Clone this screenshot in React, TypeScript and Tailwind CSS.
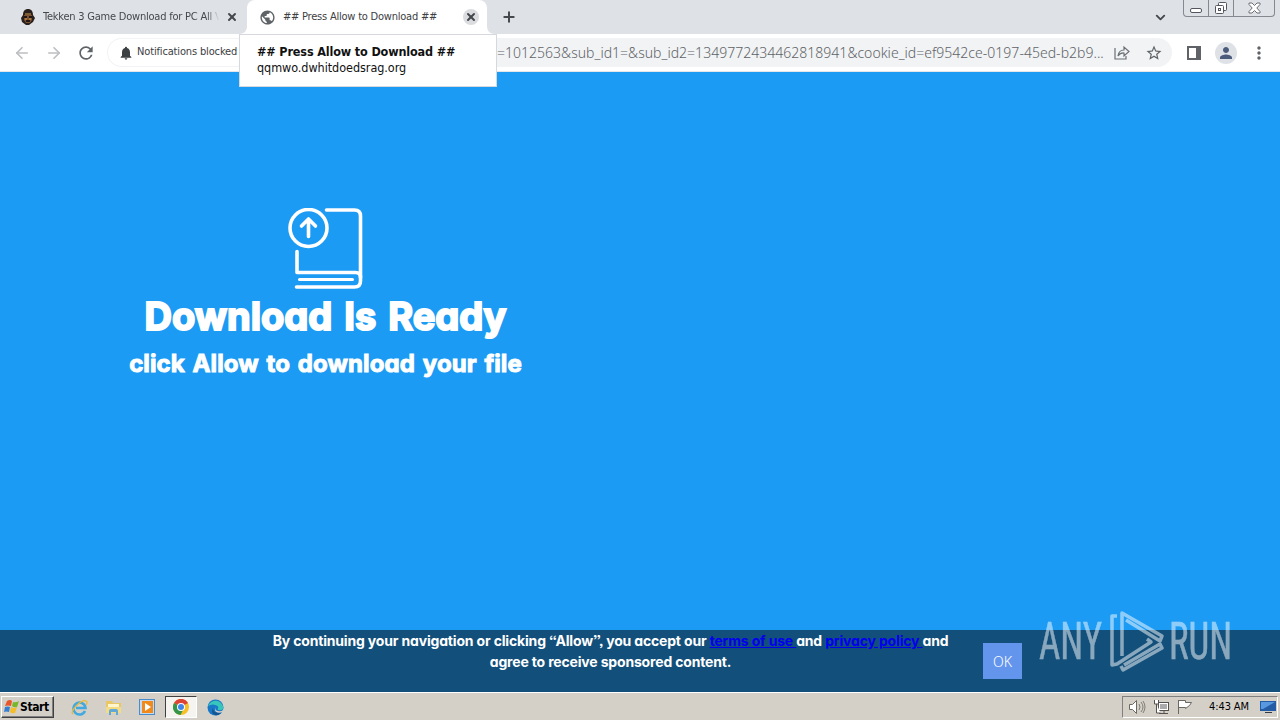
import React from 'react';
import { ArrowLeft, ArrowRight, ChevronDown, Plus, X } from 'lucide-react';
import { MdRefresh, MdNotifications, MdPublic, MdStarBorder, MdPerson, MdMoreVert } from 'react-icons/md';

const UI = "font-['DejaVu_Sans_Condensed','DejaVu_Sans',sans-serif] [font-stretch:condensed]";

function WindowControls() {
  return (
    <div className="ml-[15px] mr-[5px] flex h-[17px] w-[92px] shrink-0 self-start rounded-b-[4px] border border-t-0 border-[#85888f] bg-[#dee1e6]">
      <div className="flex w-[25px] items-end justify-center border-r border-[#85888f] pb-[3px]">
        <div className="h-[5px] w-3 rounded-[2px] border border-[#53565f] bg-white" />
      </div>
      <div className="flex w-[25px] items-center justify-center border-r border-[#85888f]">
        <svg width="14" height="14" viewBox="0 0 14 14" fill="#fff" stroke="#53565f">
          <rect x="4.5" y="1.5" width="8" height="8" rx="1" />
          <rect x="1.5" y="4.5" width="8" height="8" rx="1" />
          <rect x="4.5" y="7.5" width="2" height="2" />
        </svg>
      </div>
      <div className="flex flex-1 items-center justify-center">
        <svg width="13" height="12" viewBox="0 0 13 12" fill="#fff" stroke="#6a6d76">
          <path d="M1 1h3l2.5 2.5L9 1h3v1.5L8.8 6l3.2 3.5V11H9L6.5 8.5 4 11H1V9.5L4.2 6 1 2.5z" />
        </svg>
      </div>
    </div>
  );
}

function TabStrip() {
  return (
    <div className="flex h-[34px] items-center bg-[#dee1e6]">
      <div className="flex w-[247px] items-center pl-5">
        <svg width="16" height="16" viewBox="0 0 16 16" className="shrink-0">
          <path d="M3 6C3 2 5 0 8 0s5 2 5 6l2 3-2 4-4 3H6l-4-3-1-4z" fill="#29201d" />
          <path d="M4 6h8v5l-2 3H6l-2-3z" fill="#7d5030" />
          <path d="M4 7h3v2H4zM9 7h3v2H9zM6 11h4v2H6z" fill="#211816" />
          <path d="M5 5h6M5 10h2M9 10h2" stroke="#d49b52" />
        </svg>
        <div className="ml-[7px] w-[178px] whitespace-nowrap text-[11px] tracking-[-0.22px] text-[#45484d] [mask-image:linear-gradient(to_right,#000_92%,transparent_99%)]">
          Tekken 3 Game Download for PC All V
        </div>
        <X className="ml-[5px] h-3 w-3 shrink-0 text-[#45484d]" strokeWidth={4} />
      </div>
      <div className="relative flex h-full w-[240px] items-center rounded-t-lg bg-white pl-3">
        <svg className="absolute bottom-0 -left-2" width="8" height="8" viewBox="0 0 8 8">
          <path d="M8 0v8H0C5 8 8 5 8 0z" fill="#fff" />
        </svg>
        <svg className="absolute bottom-0 -right-2" width="8" height="8" viewBox="0 0 8 8">
          <path d="M0 0v8h8C3 8 0 5 0 0z" fill="#fff" />
        </svg>
        <MdPublic className="h-[17px] w-[17px] shrink-0 text-[#5f6368]" />
        <div className="ml-[7px] w-[180px] whitespace-nowrap text-[11px] tracking-[-0.22px] text-[#3c4043]">
          ## Press Allow to Download ##
        </div>
        <div className="flex h-4 w-4 items-center justify-center rounded-full bg-[#dadce0]">
          <X className="h-3 w-3 text-[#45484d]" strokeWidth={4} />
        </div>
      </div>
      <Plus className="ml-[14px] h-4 w-4 text-[#45484d]" strokeWidth={3} />
      <ChevronDown className="ml-auto h-[15px] w-[15px] text-[#45484d]" strokeWidth={3} />
      <WindowControls />
    </div>
  );
}

function Toolbar() {
  return (
    <div className="flex h-[38px] items-center border-b border-[#e4e6e9] bg-white pl-[13px]">
      <ArrowLeft className="h-[18px] w-[18px] text-[#bcbec1]" strokeWidth={2.2} />
      <ArrowRight className="ml-[14px] h-[18px] w-[18px] text-[#bcbec1]" strokeWidth={2.2} />
      <MdRefresh className="ml-[13px] h-5 w-5 text-[#5f6368]" />
      <div className="ml-3 flex h-[29px] w-[1064px] items-center rounded-full bg-[#f1f3f4]">
        <div className="flex h-[27px] w-[150px] items-center rounded-l-full bg-white pl-[10px] ring-1 ring-[#f1f3f4]">
          <MdNotifications className="h-4 w-4 shrink-0 text-[#3c4043]" />
          <span className="ml-[3px] whitespace-nowrap text-[11px] tracking-[-0.15px] text-[#3c4043]">Notifications blocked</span>
        </div>
        <div className="ml-[239px] w-[610px] whitespace-nowrap font-['Noto_Sans',sans-serif] text-[14px] font-light tracking-[0.02px] text-[#5f6368]">
          =1012563&amp;sub_id1=&amp;sub_id2=1349772434462818941&amp;cookie_id=ef9542ce-0197-45ed-b2b9...
        </div>
        <svg className="ml-[7px] shrink-0" width="16" height="16" viewBox="0 0 16 16" fill="none" stroke="#6b6f74" strokeWidth="1.2">
          <path d="M1 3v11h11v-3" />
          <path d="M4 11c.5-4 3-6 6-6V2l5 4.500L10 11V8c-2.500-.2-4.500.8-6 3z" />
        </svg>
        <MdStarBorder className="ml-[15px] h-[18px] w-[18px] shrink-0 text-[#5f6368]" />
      </div>
      <div className="ml-[15px] h-[14px] w-[14px] border-2 border-r-[5px] border-[#5f6368]" />
      <div className="ml-[14px] flex h-[22px] w-[22px] items-center justify-center rounded-full bg-[#dee1e6]">
        <MdPerson className="h-[18px] w-[18px] text-[#4a5b7c]" />
      </div>
      <MdMoreVert className="ml-3 h-5 w-5 text-[#5f6368]" />
    </div>
  );
}

function TabTooltip() {
  return (
    <div className="absolute top-[34px] left-[239px] h-[53px] w-[258px] border border-[#d5d8dc] bg-white pt-[9px] pl-[17px] text-[#111]">
      <div className="whitespace-nowrap text-[12.5px] leading-4 font-bold tracking-[-0.14px]">## Press Allow to Download ##</div>
      <div className="whitespace-nowrap text-[12.5px] leading-4 tracking-[-0.05px]">qqmwo.dwhitdoedsrag.org</div>
    </div>
  );
}

function BookIcon() {
  return (
    <svg width="76" height="82" viewBox="0 0 76 82" fill="none" stroke="#fff" strokeWidth="3.6" strokeLinecap="round">
      <circle cx="20.500" cy="20" r="18.500" />
      <path d="M20.500 28.500V12M13.500 18l7-7 7 7" />
      <path d="M38.500 2h28q6 0 6 6V73q0 6-6 6H8.500" />
      <path d="M9 43.500v21H67.500q5 0 5 5" />
      <path d="M11.500 71.500h53" strokeWidth="3" />
    </svg>
  );
}

const ROUNDED = "font-[Inter,sans-serif] [font-feature-settings:'cv11','ss03'] [stroke-linejoin:round] [paint-order:stroke_fill]";

function CookieBar() {
  return (
    <div className="flex h-[62px] bg-[#124f7a]">
      <p className={`${ROUNDED} ml-[260px] w-[701px] text-center text-[14px] leading-[21px] font-bold tracking-[-0.17px] text-white`}>
        <span className="whitespace-nowrap">
          By continuing your navigation or clicking “Allow”, you accept our{' '}
          <a className="text-[#0000ee] underline">terms of use </a>and{' '}
          <a className="text-[#0000ee] underline">privacy policy </a>and
        </span>
        <br />
        agree to receive sponsored content.
      </p>
      <button className="mt-[13px] ml-[22px] h-9 w-[39px] bg-[#6495ed] font-['Noto_Sans',sans-serif] text-[14px] font-light text-white">OK</button>
    </div>
  );
}

function Watermark() {
  return (
    <div className="absolute top-[608px] left-[1039px] flex h-[66px] w-[195px] items-center font-[Roboto,sans-serif] text-[52px] leading-none text-white opacity-50">
      <div className="w-[70px] pt-[2px]"><span className="inline-block origin-left scale-x-[0.71] [-webkit-text-stroke:0.5px_white]">ANY</span></div>
      <svg className="shrink-0" width="56" height="64" viewBox="0 0 56 64" fill="none" stroke="currentColor" strokeWidth="3.500" strokeLinejoin="round">
        <path d="M8 7H3v49l5-1 34-22-4-3" />
        <path d="M13 47V4l40 23-2 5-34-21" />
        <path d="M15 56l36-21 2 4-39 22-2-4" />
      </svg>
      <div className="ml-[4px] w-[62px] pt-[2px]"><span className="inline-block origin-left scale-x-[0.71] [-webkit-text-stroke:0.5px_white]">RUN</span></div>
    </div>
  );
}

function Taskbar() {
  return (
    <div className="flex h-7 items-center border-t border-white bg-[#d4d0c8] pt-px pl-px text-black">
      <div className="flex h-[22px] w-[53px] items-center border border-t-white border-r-[#404040] border-b-[#404040] border-l-white pl-[2px] shadow-[inset_-1px_-1px_#808080]">
        <svg width="16" height="16" viewBox="0 0 16 16" className="shrink-0">
          <path d="M3 2q3-2 5 0L7 7q-3-1-6 0z" fill="#e8572a" />
          <path d="M9 3q3 1 6-1l-2 6q-3 1-5-1z" fill="#78b62b" />
          <path d="M1 8q3-1 5 0l-1 5q-3-1-5 0z" fill="#347fd1" />
          <path d="M7 8q3 2 6 0l-2 6q-3 1-5-1z" fill="#f5bd27" />
        </svg>
        <span className="text-[12px] font-bold tracking-[-0.4px]">Start</span>
      </div>
      <svg className="ml-[17px]" width="17" height="17" viewBox="0 0 17 17" fill="none">
        <path d="M14 12a6 6 0 1 1 .5-3H5" stroke="#41a9df" strokeWidth="2.600" />
        <path d="M2 15C-2 12 11 0 15 2q2 1 0 4" stroke="#e9b93a" strokeWidth="1.300" />
      </svg>
      <svg className="ml-[17px]" width="17" height="17" viewBox="0 0 17 17">
        <path d="M1 2h6l1 2h8v9H1z" fill="#e9c765" />
        <path d="M3 5h11v5H3z" fill="#fff6cf" />
        <path d="M1 8h15v6H1z" fill="#f4dc85" />
        <path d="M4 16v-4q0-2 2-2h5q2 0 2 2v4h-2v-3H6v3z" fill="#61a8d6" />
      </svg>
      <svg className="ml-[17px]" width="17" height="17" viewBox="0 0 17 17">
        <rect x="0.500" y="0.500" width="15" height="15" fill="#c3daf0" stroke="#4b8cc8" />
        <rect x="3" y="2" width="11" height="12" fill="#f08a1d" />
        <path d="M6 4l6 4-6 4z" fill="#fff" />
      </svg>
      <div className="ml-[9px] flex h-[22px] w-8 items-center justify-center border border-[#404040] border-r-white border-b-white bg-[#f5f4f1]">
        <svg width="16" height="16" viewBox="0 0 16 16">
          <circle cx="8" cy="8" r="8" fill="#f6c026" />
          <path d="M8 8L1 4A8 8 0 0 1 15 4z" fill="#dc4438" />
          <path d="M8 8L1 4A8 8 0 0 0 7.500 16l3-6z" fill="#34964b" />
          <circle cx="8" cy="8" r="4" fill="#fff" />
          <circle cx="8" cy="8" r="3" fill="#4285e8" />
        </svg>
      </div>
      <svg className="ml-[10px]" width="17" height="17" viewBox="0 0 17 17">
        <circle cx="8.500" cy="8.500" r="8" fill="#1878c7" />
        <path d="M1 7a8 8 0 0 1 15.500 2q-1 3-5 2c-2-1 1-2-1-4Q6 4 1 7z" fill="#38c5bc" />
        <path d="M6 9q0 6 8 4-2 4-6 3-5-2-2-7z" fill="#145591" />
        <path d="M9 8q-2 3 2 4 3 1 5-1v2q-7 2-8-2 0-2 1-3z" fill="#d4d0c8" />
      </svg>
      <div className="mr-[2px] ml-auto flex h-[22px] w-[156px] items-center border border-[#808080] border-r-white border-b-white pl-[6px]">
        <svg width="17" height="16" viewBox="0 0 17 16" fill="#fff" stroke="#6a6862">
          <path d="M.5 5.500h3l4-4v13l-4-4h-3z" />
          <path d="M10 5q2 3 0 6M12 3q4 5 0 10M14 2q4 6 0 12" fill="none" strokeWidth="0.800" />
        </svg>
        <svg className="ml-[7px]" width="17" height="16" viewBox="0 0 17 16" fill="#fff" stroke="#55534f">
          <rect x="5.500" y="3.500" width="10" height="8" />
          <path d="M7 5h7v5H7z" fill="#aaa" stroke="none" />
          <path d="M6 14.500h9M11 12v2" />
          <path d="M1.500 1v4h4V1M3.500 5v9h4" />
        </svg>
        <svg className="ml-[7px]" width="17" height="16" viewBox="0 0 17 16" fill="#fff" stroke="#6a6862">
          <path d="M1.500 1.500h7v2h6l-2 3-4 3v-1h-7z" />
          <path d="M1.500 1v14" />
        </svg>
        <span className="ml-[15px] w-[43px] text-[11px] tracking-[-0.1px] whitespace-nowrap">4:43 AM</span>
        <svg className="ml-[8px] shrink-0" width="16" height="14" viewBox="0 0 16 14">
          <path d="M0 1h16v10H0z" fill="#245ba5" />
          <path d="M1 2h14L3 9H1z" fill="#5798df" />
          <path d="M5 12h7v1H5z" fill="#303a48" />
        </svg>
      </div>
    </div>
  );
}

export default function App() {
  return (
    <div className={`${UI} relative flex h-[720px] w-[1280px] flex-col overflow-hidden bg-[#1c9bf4]`}>
      <TabStrip />
      <Toolbar />
      <main className="flex flex-1 flex-col">
        <div className={`${ROUNDED} flex w-[651px] flex-1 flex-col items-center pt-[136px] font-bold text-white`}>
          <BookIcon />
          <h1 className="mt-px text-[38px] leading-[50px] whitespace-nowrap [word-spacing:3px] [-webkit-text-stroke:2px_white]">Download Is Ready</h1>
          <h2 className="mt-[7px] text-[24px] leading-[32px] tracking-[0.1px] whitespace-nowrap [word-spacing:2px] [-webkit-text-stroke:1px_white]">click Allow to download your file</h2>
        </div>
        <CookieBar />
      </main>
      <Taskbar />
      <TabTooltip />
      <Watermark />
    </div>
  );
}
